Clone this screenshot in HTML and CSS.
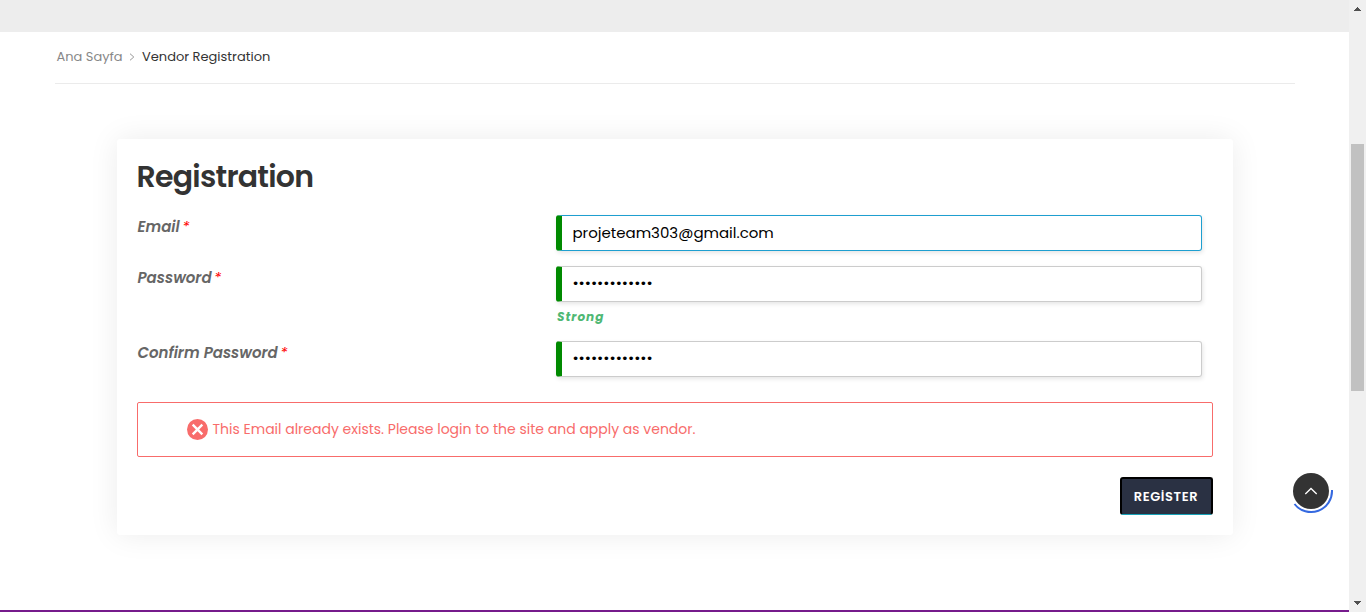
FILE: index.html
```html
<!DOCTYPE html>
<html lang="tr">
<head>
<meta charset="utf-8">
<title>Vendor Registration</title>
<link rel="stylesheet" href="styles.css">
</head>
<body>
<div class="window">
  <div class="page">
    <div class="topband"></div>
    <nav class="crumbs">
      <a class="crumb-home">Ana Sayfa</a>
      <svg class="crumb-sep" viewBox="0 0 6 8"><path d="M1 .7 4.8 4 1 7.3"/></svg>
      <span class="crumb-current">Vendor Registration</span>
    </nav>
    <main class="card">
      <h1>Registration</h1>
      <form>
        <div class="row">
          <label>Email<b>*</b></label>
          <div class="field"><div class="input focused"><span class="value">projeteam303@gmail.com</span></div></div>
        </div>
        <div class="row row-pass">
          <label>Password<b>*</b></label>
          <div class="field"><div class="input secret"><span class="dots">•••••••••••••</span></div><div class="strength">Strong</div></div>
        </div>
        <div class="row">
          <label>Confirm Password<b>*</b></label>
          <div class="field"><div class="input secret"><span class="dots">•••••••••••••</span></div></div>
        </div>
        <div class="alert">
          <svg viewBox="0 0 20 20"><circle cx="10" cy="10" r="10"/><path d="m5.4 5.4 9.2 9.2m0-9.2-9.2 9.2"/></svg>
          <span>This Email already exists. Please login to the site and apply as vendor.</span>
        </div>
        <div class="actions"><button type="button">REGİSTER</button></div>
      </form>
    </main>
    <div class="footer-line"></div>
    <svg class="to-top" viewBox="0 0 44 44">
      <circle class="disc" cx="20" cy="20" r="18"/>
      <path class="arc" d="M41 19A21 21 0 0 1 3.5 33"/>
      <path class="chev" d="m14.3 23 5.7-5.5 5.7 5.5"/>
    </svg>
  </div>
  <div class="scrollbar">
    <svg class="arrow" viewBox="0 0 7 4" shape-rendering="crispEdges"><path d="M3 0h1v1h1v1h1v1h1v1H0V3h1V2h1V1h1z"/></svg>
    <div class="thumb"></div>
    <svg class="arrow down" viewBox="0 0 7 4" shape-rendering="crispEdges"><path d="M0 0h7v1H6v1H5v1H4v1H3V3H2V2H1V1H0z"/></svg>
  </div>
</div>
</body>
</html>
```
FILE: styles.css
```css
* { box-sizing: border-box; }
body { margin: 0; overflow: hidden; background: #fff; font-family: Poppins, Inter, sans-serif; color: #333; }
.window { display: flex; width: 1366px; height: 612px; }
.page { position: relative; display: flex; flex-direction: column; width: 1349px; height: 612px; }
.topband { height: 32px; background: #ededed; }
.crumbs { display: flex; align-items: center; height: 52px; margin: 0 54px 0 55px; padding: 0 2px 1px; border-bottom: 1px solid #ebebeb; font-size: 13px; white-space: nowrap; }
.crumb-home { width: 73px; margin-left: -.5px; margin-right: .5px; color: #888; }
.crumb-sep { width: 6px; height: 8px; margin-right: 6px; margin-left: -1px; padding: 0; fill: none; stroke: #999; stroke-width: 1; }
.crumb-current { margin-left: 1px; }
.card { width: 1116px; height: 396px; margin: 55px 0 0 117px; padding: 18px 20px 20px; border-radius: 3px; background: #fff; box-shadow: 0 0 30px rgba(0,0,0,.08); }
h1 { height: 58px; margin: 0; font-size: 30px; line-height: 40px; font-weight: 600; letter-spacing: -.75px; text-indent: -.5px; white-space: nowrap; }
.row { display: flex; height: 51px; }
.row-pass { height: 75px; }
label { width: 419px; padding-left: .5px; font-size: 15px; font-weight: 600; font-style: italic; line-height: 24px; color: #666; white-space: nowrap; }
label b { margin-left: 2.5px; color: #f00; font-weight: 400; }
.field { width: 646px; }
.input { display: flex; align-items: center; height: 36px; padding-left: 10.4px; border: 1px solid #ccc; border-left: 6px solid #008a00; border-radius: 3px; box-shadow: 1px 2px 4px rgba(0,0,0,.1); color: #000; font-size: 15px; white-space: nowrap; }
.input.focused { padding-bottom: 2px; border-color: #1e9fd0 #1e9fd0 #1e9fd0 #008a00; }
.secret { padding-bottom: 3px; }
.strength { padding: 6px 0 0 1px; font-size: 12px; line-height: 18px; font-weight: 700; font-style: italic; letter-spacing: 1px; color: #4fb874; }
.alert { display: flex; align-items: center; height: 55px; margin-top: 10px; padding-left: 49px; border: 1px solid #f86c6b; border-radius: 2px; color: #f86c6b; font-size: 14px; white-space: nowrap; }
.alert svg { width: 21px; height: 21px; margin-right: 4.5px; fill: #f86c6b; }
.alert path { stroke: #fff; stroke-width: 2.2; }
.actions { display: flex; justify-content: flex-end; margin-top: 20px; }
button { width: 93px; height: 38px; padding: 0 1px 0 0; border: 2px solid #000; border-bottom: 1px solid #17a2b8; border-radius: 3px; background: #2a3143; color: #fff; font: 600 13px/34px Poppins, Inter, sans-serif; letter-spacing: .6px; white-space: nowrap; }
.footer-line { height: 2px; margin-top: auto; background: #761b8c; }
.to-top { position: absolute; left: 1291px; top: 471px; width: 44px; height: 44px; fill: none; }
.disc { fill: #333; }
.arc { stroke: #3569e0; stroke-width: 2; }
.chev { stroke: #fff; stroke-width: 1.3; }
.scrollbar { display: flex; flex-direction: column; align-items: center; width: 17px; height: 612px; padding: 7px 0; background: #f0f0f0; }
.arrow { width: 7px; height: 4px; fill: #505050; }
.thumb { width: 13px; height: 247px; margin: 133px 0 auto; background: #c1c1c1; }
```
